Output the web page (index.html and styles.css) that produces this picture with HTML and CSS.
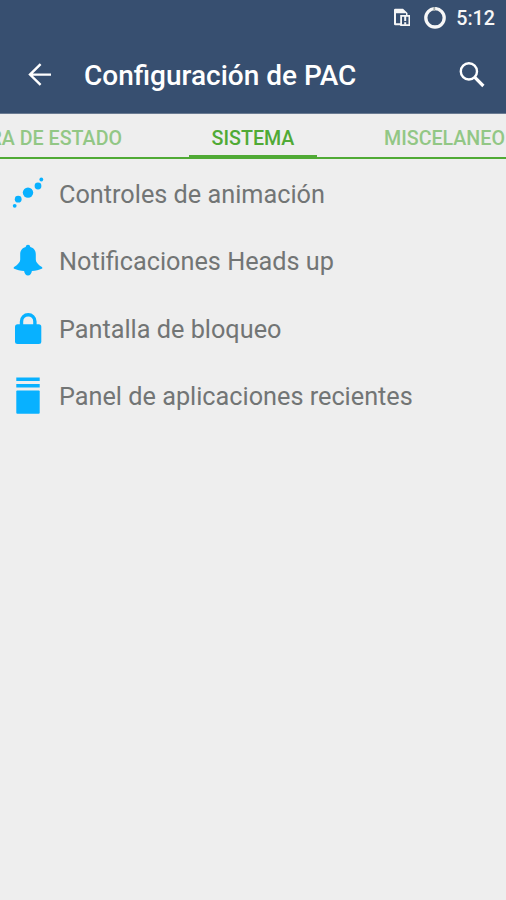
FILE: index.html
```
<!DOCTYPE html>
<html lang="es">
<head>
<meta charset="utf-8">
<title>Configuración de PAC</title>
<link rel="stylesheet" href="styles.css">
</head>
<body>
<header class="header">
  <div class="status">
    <svg class="status-icon" width="18" height="20" viewBox="0 0 18 20">
      <path fill-rule="evenodd" d="M1 2a1.200 1.200 0 0 1 1.200-1.200H10L14.500 5v2H17v11H7.200v-.8H2.200A1.200 1.200 0 0 1 1 16zM3 5.300v9.900h4.200V7H13V5.300zM9 8.800v7.400h6.500V8.800z" fill="#f7f7f7"/>
      <path d="M11.200 8v5h2V8zM11.200 14.200v2.500h2v-2.500z" fill="#f7f7f7"/>
    </svg>
    <svg class="status-ring" width="22" height="22" viewBox="0 0 22 22">
      <circle cx="11" cy="10.800" r="9.200" fill="none" stroke="#f7f7f7" stroke-width="3.300"/>
      <path d="M10.300 0v4" stroke="#a0aaa9" stroke-width="1.800"/>
    </svg>
    <span class="clock">5:12</span>
  </div>
  <div class="toolbar">
    <svg class="back" width="24" height="24" viewBox="0 0 24 24"><path d="M12.600 1.200 2 11.600l10.600 10.300M2 11.600h21" fill="none" stroke="#fff" stroke-width="2.400"/></svg>
    <h1 class="title">Configuración de PAC</h1>
    <svg class="search" width="26" height="26" viewBox="0 0 26 26"><circle cx="9.900" cy="9.400" r="8.100" fill="none" stroke="#fff" stroke-width="2.400"/><path d="m15.600 15.200 8.800 8.800" stroke="#fff" stroke-width="3.200"/></svg>
  </div>
</header>
<nav class="tabs">
  <div class="tab tab-left"><span>BARRA DE ESTADO</span></div>
  <div class="tab tab-active"><span>SISTEMA</span></div>
  <div class="tab tab-right"><span>MISCELANEO</span></div>
</nav>
<main class="list">
  <div class="row">
    <svg class="icon" viewBox="0 160 56 67.5"><circle cx="14.700" cy="205.800" r="1.900"/><circle cx="18.200" cy="199.200" r="3.400"/><circle cx="28" cy="192.600" r="5.200"/><circle cx="38" cy="186" r="3.400"/><circle cx="41.300" cy="179.500" r="1.900"/></svg>
    <span>Controles de animación</span>
  </div>
  <div class="row">
    <svg class="icon" viewBox="0 227.5 56 67.5"><path d="M28 244.300c1.300 0 2 .8 2.300 2.100 3.700.8 5.500 3.700 5.500 7.500v5c0 3 2.800 5.300 6.100 7.700.7.600.6 1.300-.2 1.700-2.500 1.100-6 1.900-9.800 2.200-.4 2.700-1.800 4.600-3.900 4.600s-3.500-1.900-3.900-4.600c-3.800-.3-7.300-1.100-9.800-2.200-.8-.4-.9-1.100-.2-1.700 3.300-2.400 6.100-4.700 6.100-7.700v-5c0-3.800 1.800-6.700 5.500-7.500.3-1.300 1-2.100 2.300-2.100z"/></svg>
    <span>Notificaciones Heads up</span>
  </div>
  <div class="row">
    <svg class="icon" viewBox="0 295 56 67.5"><rect x="15" y="324.200" width="26.300" height="19.800" rx="2.500"/><path class="shackle" d="M21.500 326v-4.600a6.700 6.700 0 0 1 13.400 0v4.600"/></svg>
    <span>Pantalla de bloqueo</span>
  </div>
  <div class="row">
    <svg class="icon" viewBox="0 362.5 56 67.5"><path d="M16.300 377h23.400v3.500H16.300zM16.300 383.500h23.400v3.500H16.300z"/><rect x="16.300" y="390" width="23.400" height="23.200" rx="1"/></svg>
    <span>Panel de aplicaciones recientes</span>
  </div>
</main>
</body>
</html>
```
FILE: styles.css
```
* { box-sizing: border-box; }
body {
  margin: 0;
  height: 900px;
  overflow: hidden;
  background: #eee;
  font-family: Roboto, "Liberation Sans", sans-serif;
}
svg { display: block; flex: none; }
.header { height: 114px; background: #374f70; border-bottom: 1px solid #6a7b92; color: #fff; }
.status {
  display: flex;
  align-items: center;
  justify-content: flex-end;
  height: 36px;
  padding-right: 11px;
}
.status-icon { margin-right: 13px; }
.status-ring { margin-right: 10px; }
.clock { padding-top: 2px; font-size: 19.700px; font-weight: 500; line-height: 34px; color: #f7f7f7; }
.toolbar { display: flex; align-items: center; height: 78px; padding: 0 21px 0 28px; }
.title { margin: 1px 0 0 32px; font-size: 28px; font-weight: 500; line-height: 40px; white-space: nowrap; }
.search { margin-left: auto; }
.tabs {
  display: grid;
  grid-template-columns: 189px 128px 189px;
  height: 45px;
  border-bottom: 2px solid #50aa35;
  overflow: hidden;
  font-size: 19.650px;
  font-weight: 500;
  line-height: 50px;
  white-space: nowrap;
}
.tab { display: flex; height: 43px; color: #92c785; }
.tab-left { justify-content: flex-end; padding-right: 67px; }
.tab-active { justify-content: center; color: #50aa35; border-bottom: 2px solid #50aa35; }
.tab-right { padding-left: 67px; }
.list { padding-top: 1px; }
.row { display: flex; align-items: center; height: 67.500px; font-size: 25.250px; color: #727575; }
.row span { margin-left: 3px; padding-top: 1px; white-space: nowrap; }
.icon { width: 56px; height: 67.500px; fill: #08b1ff; }
.shackle { fill: none; stroke: #08b1ff; stroke-width: 3.400px; }
```
